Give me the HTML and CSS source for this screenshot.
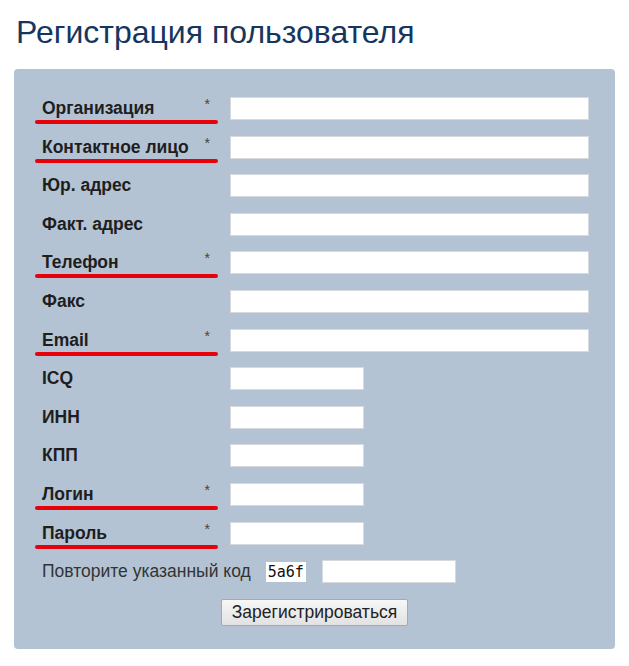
FILE: index.html
```html
<!DOCTYPE html>
<html lang="ru">
  <head>
    <meta charset="UTF-8" />
    <title>Регистрация пользователя</title>
    <link rel="stylesheet" href="styles.css">
  </head>

  <body>
    <h1 class="title">Регистрация пользователя</h1>

    <form class="panel">
      <label class="label">Организация <span class="star">*</span><span class="mark"></span></label>
      <input class="field wide" type="text">

      <label class="label">Контактное лицо <span class="star">*</span><span class="mark"></span></label>
      <input class="field wide" type="text">

      <label class="label">Юр. адрес</label>
      <input class="field wide" type="text">

      <label class="label">Факт. адрес</label>
      <input class="field wide" type="text">

      <label class="label">Телефон <span class="star">*</span><span class="mark"></span></label>
      <input class="field wide" type="text">

      <label class="label">Факс</label>
      <input class="field wide" type="text">

      <label class="label">Email <span class="star">*</span><span class="mark"></span></label>
      <input class="field wide" type="text">

      <label class="label">ICQ</label>
      <input class="field short" type="text">

      <label class="label">ИНН</label>
      <input class="field short" type="text">

      <label class="label">КПП</label>
      <input class="field short" type="text">

      <label class="label">Логин <span class="star">*</span><span class="mark"></span></label>
      <input class="field short" type="text">

      <label class="label">Пароль <span class="star">*</span><span class="mark"></span></label>
      <input class="field short" type="password">

      <div class="captcha">
        <span class="captchaText">Повторите указанный код</span>
        <span class="code">5a6f</span>
        <input class="field short" type="text">
      </div>

      <div class="actions">
        <button class="submit" type="button">Зарегистрироваться</button>
      </div>
    </form>
  </body>
</html>
```

FILE: styles.css
```css
body {
  margin: 0;
  padding: 0 14px;
  font-family: "Liberation Sans", Arial, sans-serif;
  background-color: white;
}

.title {
  margin: 14px 0 0 2px;
  font-size: 32px;
  font-weight: normal;
  line-height: 37px;
  color: #17365d;
}

.panel {
  display: grid;
  grid-template-columns: 188px 1fr;
  grid-auto-rows: 23px;
  row-gap: 15.6px;
  align-items: center;
  width: 601px;
  margin-top: 18px;
  padding: 28px 0 27px 28px;
  box-sizing: border-box;
  background-color: #b4c3d3;
  border-radius: 4px;
}

.label {
  position: relative;
  font-size: 17.5px;
  font-weight: bold;
  color: #1e1e1e;
}

.star {
  position: absolute;
  right: 20px;
  top: -2px;
  font-size: 14px;
  font-weight: normal;
  color: #444;
}

.mark {
  position: absolute;
  left: -7px;
  right: 12px;
  top: 22px;
  height: 4px;
  border-radius: 2px;
  background-color: #e8000b;
}

.field {
  height: 23px;
  box-sizing: border-box;
  border: 1px solid #d6d9dd;
  background-color: white;
  padding: 2px 4px;
  margin: 0;
}

.wide {
  width: 359px;
}

.short {
  width: 134px;
}

.captcha {
  grid-column: 1 / 3;
  display: flex;
  align-items: center;
}

.captchaText {
  font-size: 17.5px;
  color: #333;
}

.code {
  margin: 0 16px 0 15px;
  padding: 1px 2px;
  background-color: white;
  font-family: "DejaVu Sans Mono", monospace;
  font-size: 15px;
  color: #111;
}

.actions {
  grid-column: 1 / 3;
  display: flex;
  justify-content: center;
  margin-left: -28px;
  align-self: start;
}

.submit {
  height: 27px;
  padding: 0 10px;
  font-family: "Liberation Sans", Arial, sans-serif;
  font-size: 17.5px;
  color: #222;
  border: 1px solid #a9a9a9;
  border-radius: 2px;
  background: linear-gradient(#f7f7f7, #e2e2e2);
}
```
